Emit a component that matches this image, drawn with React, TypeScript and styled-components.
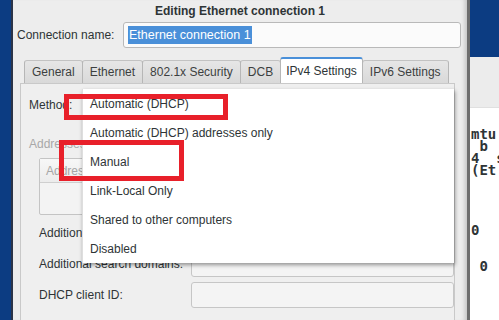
import React from "react";
import styled, { createGlobalStyle } from "styled-components";

const GlobalStyle = createGlobalStyle`
    html, body {
        margin: 0;
        padding: 0;
        width: 499px;
        height: 320px;
        overflow: hidden;
        font-family: "Liberation Sans", Arial, sans-serif;
    }
`;

const tabs = ["General", "Ethernet", "802.1x Security", "DCB", "IPv4 Settings", "IPv6 Settings"];
const methods = [
    "Automatic (DHCP)",
    "Automatic (DHCP) addresses only",
    "Manual",
    "Link-Local Only",
    "Shared to other computers",
    "Disabled",
];
const termLines = ["mtu", " b", "4  s", "(Et", "", "", "", "", "0", "", "", " 0"];

export default function App() {
    return (
        <>
            <GlobalStyle />
            <Screen>
                <DesktopEdge />
                <Dialog>
                    <TitleBar>Editing Ethernet connection 1</TitleBar>
                    <NameRow>
                        <NameLabel>Connection name:</NameLabel>
                        <Entry>
                            <Selected>Ethernet connection 1</Selected>
                        </Entry>
                    </NameRow>
                    <Notebook>
                        <TabStrip>
                            {tabs.map((t) => (
                                <Tab key={t} active={t === "IPv4 Settings"}>{t}</Tab>
                            ))}
                        </TabStrip>
                        <Panel>
                            <MethodRow>Method:</MethodRow>
                            <SectionLabel>Addresses</SectionLabel>
                            <AddressTable>
                                <TableHeader>Address</TableHeader>
                            </AddressTable>
                            <FieldRow>
                                <FieldLabel>Additional DNS servers:</FieldLabel>
                                <Field />
                            </FieldRow>
                            <FieldRow>
                                <FieldLabel>Additional search domains:</FieldLabel>
                                <Field />
                            </FieldRow>
                            <FieldRow>
                                <FieldLabel>DHCP client ID:</FieldLabel>
                                <Field />
                            </FieldRow>
                        </Panel>
                    </Notebook>
                </Dialog>
                <SideColumn>
                    <BlueTop />
                    <Terminal>
                        <TermBar />
                        <TermText>{termLines.join("\n")}</TermText>
                    </Terminal>
                </SideColumn>

                <Popup>
                    {methods.map((m) => (
                        <PopupItem key={m}>{m}</PopupItem>
                    ))}
                </Popup>
                <Mark left={64} top={94} width={164} height={26} />
                <Mark left={59} top={140} width={125} height={41} />
            </Screen>
        </>
    );
}

const Screen = styled.div`
    position: relative;
    display: flex;
    flex-direction: row;
    width: 499px;
    height: 320px;
    background-color: #0c3c82;
    overflow: hidden;
`;

const DesktopEdge = styled.div`
    width: 11px;
    flex-shrink: 0;
    background-color: #0c3c82;
`;

const Dialog = styled.div`
    width: 454px;
    flex-shrink: 0;
    display: flex;
    flex-direction: column;
    overflow: hidden;
    background-color: #ededed;
    border-left: 2px solid #2b3448;
    border-right: 3px solid #6e6e6e;
    box-shadow: inset -5px 0 4px -3px rgba(0, 0, 0, 0.18);
    color: #2e3436;
    font-size: 12px;

    & > * {
        flex-shrink: 0;
    }
`;

const TitleBar = styled.div`
    height: 21px;
    display: flex;
    align-items: center;
    justify-content: center;
    font-weight: bold;
    font-size: 12px;
    padding-bottom: 1px;
`;

const NameRow = styled.div`
    display: flex;
    flex-direction: row;
    align-items: center;
    height: 26px;
    padding-left: 4px;
`;

const NameLabel = styled.div`
    width: 106px;
`;

const Entry = styled.div`
    width: 332px;
    height: 24px;
    display: flex;
    align-items: center;
    padding-left: 4px;
    background-color: #fbfbfb;
    border: 1px solid #b9b9b9;
    border-radius: 3px;
`;

const Selected = styled.span`
    background-color: #4a90d9;
    color: #fff;
    font-size: 12.5px;
    line-height: 18px;
    padding: 0 1px;
`;

const Notebook = styled.div`
    margin: 9px 0 0 7px;
    width: 435px;
    display: flex;
    flex-direction: column;
`;

const TabStrip = styled.div`
    display: flex;
    flex-direction: row;
    align-items: flex-end;
    height: 26px;
    padding-left: 4px;
`;

const Tab = styled.div<{ active?: boolean }>`
    height: ${(p) => (p.active ? "24px" : "22px")};
    display: flex;
    align-items: center;
    padding: 0 ${(p) => (p.active ? "5px" : "7px")};
    margin-right: -1px;
    border: 1px solid #b6b6b6;
    border-bottom: none;
    border-top: ${(p) => (p.active ? "2px solid #4a90d9" : "1px solid #c2c2c2")};
    border-radius: 3px 3px 0 0;
    background: ${(p) => (p.active ? "#fff" : "linear-gradient(#e6e6e6, #d9d9d9)")};
    color: ${(p) => (p.active ? "#2e3436" : "#3c3f40")};
    position: relative;
    z-index: ${(p) => (p.active ? 1 : 0)};
`;

const Panel = styled.div`
    height: 240px;
    padding: 8px 0 0 8px;
    background-color: #efefef;
    border: 1px solid #c9c9c9;
    display: flex;
    flex-direction: column;

    & > * {
        flex-shrink: 0;
    }
`;

const MethodRow = styled.div`
    height: 26px;
    display: flex;
    align-items: center;
`;

const SectionLabel = styled.div`
    margin-top: 19px;
    height: 14px;
    line-height: 14px;
    color: #a8a8a8;
`;

const AddressTable = styled.div`
    margin: 7px 0 0 10px;
    width: 330px;
    height: 55px;
    background-color: #f3f3f3;
    border: 1px solid #c4c4c4;
    border-radius: 2px;
`;

const TableHeader = styled.div`
    height: 23px;
    display: flex;
    align-items: center;
    padding-left: 6px;
    color: #a6a6a6;
    border-bottom: 1px solid #cfcfcf;
    background: linear-gradient(#f7f7f7, #ececec);
`;

const FieldRow = styled.div`
    display: flex;
    flex-direction: row;
    align-items: center;
    height: 26px;
    margin-top: 5px;
    padding-left: 10px;
`;

const FieldLabel = styled.div`
    width: 152px;
`;

const Field = styled.div`
    width: 262px;
    height: 24px;
    background-color: #f4f4f4;
    border: 1px solid #c6c6c6;
    border-radius: 3px;
`;

const SideColumn = styled.div`
    flex: 1;
    display: flex;
    flex-direction: column;
`;

const BlueTop = styled.div`
    height: 57px;
    flex-shrink: 0;
    background-color: #0c3c82;
`;

const Terminal = styled.div`
    flex: 1;
    display: flex;
    flex-direction: column;
    background-color: #fff;
`;

const TermBar = styled.div`
    height: 50px;
    flex-shrink: 0;
    background-color: #ececec;
    border-bottom: 1px solid #e0e0e0;
`;

const TermText = styled.pre`
    margin: 0;
    padding: 20px 0 0 1px;
    font-family: "DejaVu Sans Mono", "Liberation Mono", monospace;
    font-weight: bold;
    font-size: 14px;
    line-height: 12px;
    color: #2e3436;
    white-space: pre;
    overflow: hidden;
`;

const Popup = styled.div`
    position: absolute;
    left: 82px;
    top: 89px;
    width: 371px;
    display: flex;
    flex-direction: column;
    background-color: #fff;
    border-left: 1px solid #dedede;
    box-shadow: 1px 2px 4px rgba(0, 0, 0, 0.4);
    color: #2e3436;
    font-size: 12px;
`;

const PopupItem = styled.div`
    height: 29px;
    display: flex;
    align-items: center;
    padding-left: 7px;
`;

const Mark = styled.div<{ left: number; top: number; width: number; height: number }>`
    position: absolute;
    box-sizing: border-box;
    left: ${(p) => p.left}px;
    top: ${(p) => p.top}px;
    width: ${(p) => p.width}px;
    height: ${(p) => p.height}px;
    border: 5px solid #e8202a;
`;
